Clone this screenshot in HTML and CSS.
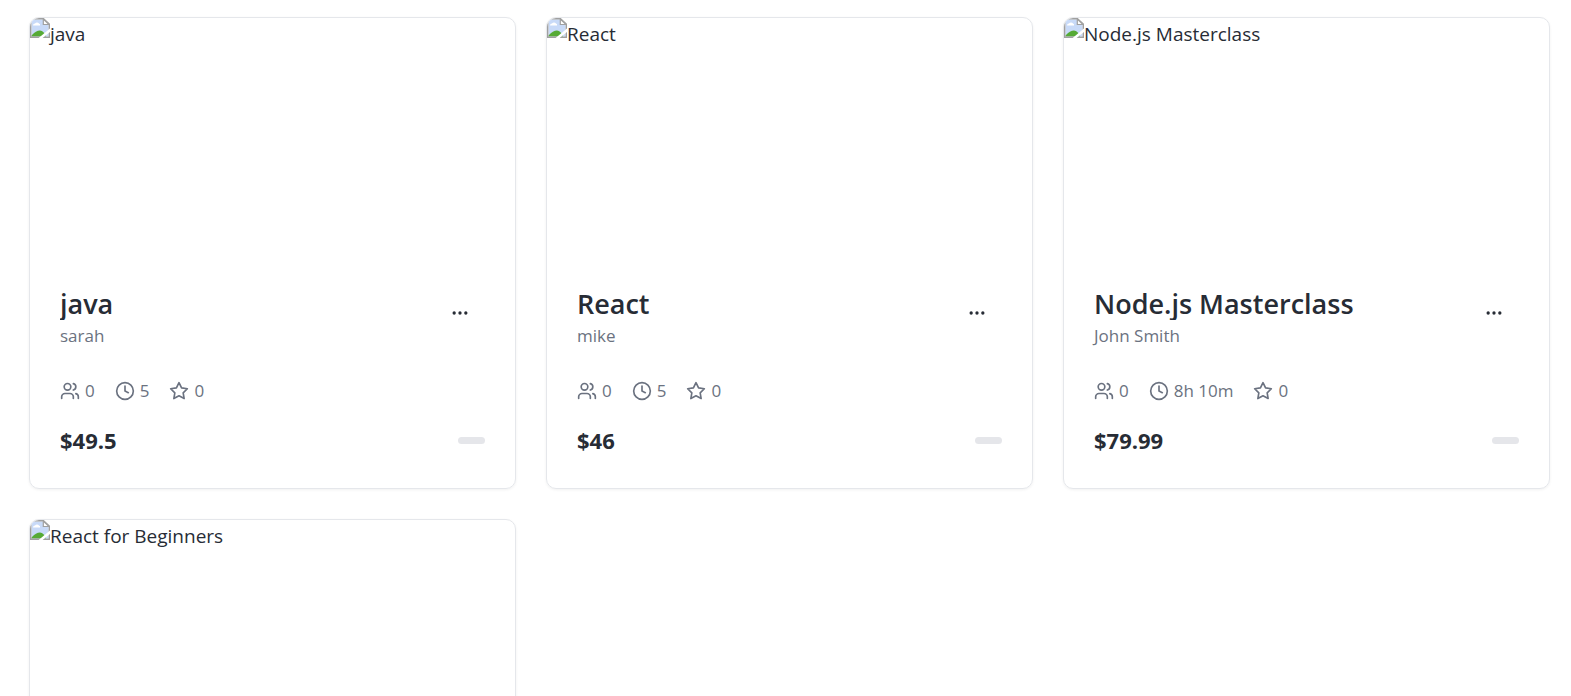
FILE: index.html
```html
<!DOCTYPE html>
<html lang="en">
<head>
<meta charset="utf-8">
<meta name="viewport" content="width=device-width, initial-scale=1">
<title>Courses</title>
<link rel="stylesheet" href="styles.css">
</head>
<body>
<svg class="sprite" aria-hidden="true">
  <symbol id="missing" viewBox="0 0 20 20">
    <path d="M0 0H14L20 6V20H0Z" fill="#fff"/>
    <path d="M1.500 1.500H13V7H18.500V18.500H1.500Z" fill="#c8daf8"/>
    <path d="M3 7.500a2 2 0 0 1 2-2a2.500 2.500 0 0 1 4 0a1.500 1.500 0 0 1 1 2Z" fill="#fff"/>
    <path d="M1.500 18.500V17.500Q6 12.500 10 12.500Q14 13 16 18.500Z" fill="#55aa35"/>
    <path d="M.7 0V19.300H19.300V6L13.500 .7H0" fill="none" stroke="#a0a0a0" stroke-width="1.400"/>
    <path d="M13.300 1V6.500H19Z" fill="#fff" stroke="#a0a0a0" stroke-width="1.200"/>
    <path d="M8 20.500L20.500 10V13.500L12 20.500Z" fill="#fff"/>
  </symbol>
  <symbol id="users" viewBox="0 0 24 24"><path d="M16 21v-2a4 4 0 0 0-4-4H6a4 4 0 0 0-4 4v2"/><circle cx="9" cy="7" r="4"/><path d="M22 21v-2a4 4 0 0 0-3-3.870"/><path d="M16 3.130a4 4 0 0 1 0 7.750"/></symbol>
  <symbol id="clock" viewBox="0 0 24 24"><circle cx="12" cy="12" r="10"/><path d="M12 6v6l4 2"/></symbol>
  <symbol id="star" viewBox="0 0 24 24"><path d="M12 2l3.090 6.260L22 9.270l-5 4.870 1.180 6.880L12 17.770l-6.180 3.250L7 14.140 2 9.270l6.910-1.010L12 2z"/></symbol>
  <symbol id="more" viewBox="0 0 24 24"><circle cx="12" cy="12" r="1"/><circle cx="19" cy="12" r="1"/><circle cx="5" cy="12" r="1"/></symbol>
</svg>
<main class="page">
<div class="courses">
  <article class="card">
    <div class="cover"><svg class="cover-icon"><use href="#missing"/></svg><span>java</span></div>
    <div class="card-header">
      <div class="heading"><h3 class="title">java</h3><p class="author">sarah</p></div>
      <button class="menu" type="button" aria-label="Course actions"><svg class="dots"><use href="#more"/></svg></button>
    </div>
    <div class="card-body">
      <div class="stats">
        <span class="stat"><svg class="icon"><use href="#users"/></svg>0</span>
        <span class="stat"><svg class="icon"><use href="#clock"/></svg>5</span>
        <span class="stat"><svg class="icon"><use href="#star"/></svg>0</span>
      </div>
      <div class="footer"><span class="price">$49.5</span><span class="badge"></span></div>
    </div>
  </article>
  <article class="card">
    <div class="cover"><svg class="cover-icon"><use href="#missing"/></svg><span>React</span></div>
    <div class="card-header">
      <div class="heading"><h3 class="title">React</h3><p class="author">mike</p></div>
      <button class="menu" type="button" aria-label="Course actions"><svg class="dots"><use href="#more"/></svg></button>
    </div>
    <div class="card-body">
      <div class="stats">
        <span class="stat"><svg class="icon"><use href="#users"/></svg>0</span>
        <span class="stat"><svg class="icon"><use href="#clock"/></svg>5</span>
        <span class="stat"><svg class="icon"><use href="#star"/></svg>0</span>
      </div>
      <div class="footer"><span class="price">$46</span><span class="badge"></span></div>
    </div>
  </article>
  <article class="card">
    <div class="cover"><svg class="cover-icon"><use href="#missing"/></svg><span>Node.js Masterclass</span></div>
    <div class="card-header">
      <div class="heading"><h3 class="title">Node.js Masterclass</h3><p class="author">John Smith</p></div>
      <button class="menu" type="button" aria-label="Course actions"><svg class="dots"><use href="#more"/></svg></button>
    </div>
    <div class="card-body">
      <div class="stats">
        <span class="stat"><svg class="icon"><use href="#users"/></svg>0</span>
        <span class="stat"><svg class="icon"><use href="#clock"/></svg>8h 10m</span>
        <span class="stat"><svg class="icon"><use href="#star"/></svg>0</span>
      </div>
      <div class="footer"><span class="price">$79.99</span><span class="badge"></span></div>
    </div>
  </article>
  <article class="card">
    <div class="cover"><svg class="cover-icon"><use href="#missing"/></svg><span>React for Beginners</span></div>
  </article>
</div>
</main>
</body>
</html>
```
FILE: styles.css
```css
* { box-sizing: border-box; }
body {
  margin: 0;
  background: #fff;
  color: #272c35;
  font-family: "Open Sans", "Noto Sans", sans-serif;
  font-size: 19px;
  line-height: 32px;
}
h3, p { margin: 0; }
.sprite { position: absolute; width: 0; height: 0; }
.page { height: 100vh; overflow: hidden; }
.courses {
  display: grid;
  grid-template-columns: repeat(3, minmax(0, 1fr));
  gap: 30px;
  padding: 17px 21px 30px 29px;
}
.card {
  border: 1px solid #e5e7eb;
  border-radius: 10px;
  overflow: hidden;
  box-shadow: 0 1px 3px rgba(0, 0, 0, .06);
}
.cover { display: flex; height: 240px; }
.cover-icon { width: 20px; height: 20px; }
.card-header { display: flex; justify-content: space-between; gap: 10px; padding: 30px; }
.heading { min-width: 0; }
.title {
  overflow: hidden;
  font-size: 27px;
  font-weight: 600;
  line-height: 32px;
  white-space: nowrap;
}
.author { margin-top: 3px; color: #6b7280; font-size: 17px; line-height: 25px; }
.menu {
  display: flex;
  align-items: center;
  justify-content: center;
  width: 50px;
  height: 50px;
  padding: 0;
  border: 0;
  background: none;
  color: inherit;
}
.icon, .dots { width: 20px; height: 20px; fill: none; stroke: currentColor; stroke-width: 2; stroke-linecap: round; stroke-linejoin: round; }
.card-body { padding: 0 30px 30px; }
.stats { display: flex; gap: 20px; color: #6b7280; font-size: 17px; line-height: 25px; }
.stat { display: flex; align-items: center; gap: 5px; }
.footer { display: flex; align-items: center; justify-content: space-between; margin-top: 20px; }
.price { font-size: 22px; font-weight: 700; line-height: 35px; }
.badge { width: 27px; height: 7px; border-radius: 4px; background: #e5e6ea; }
.card:last-child { min-height: 472px; }
```
